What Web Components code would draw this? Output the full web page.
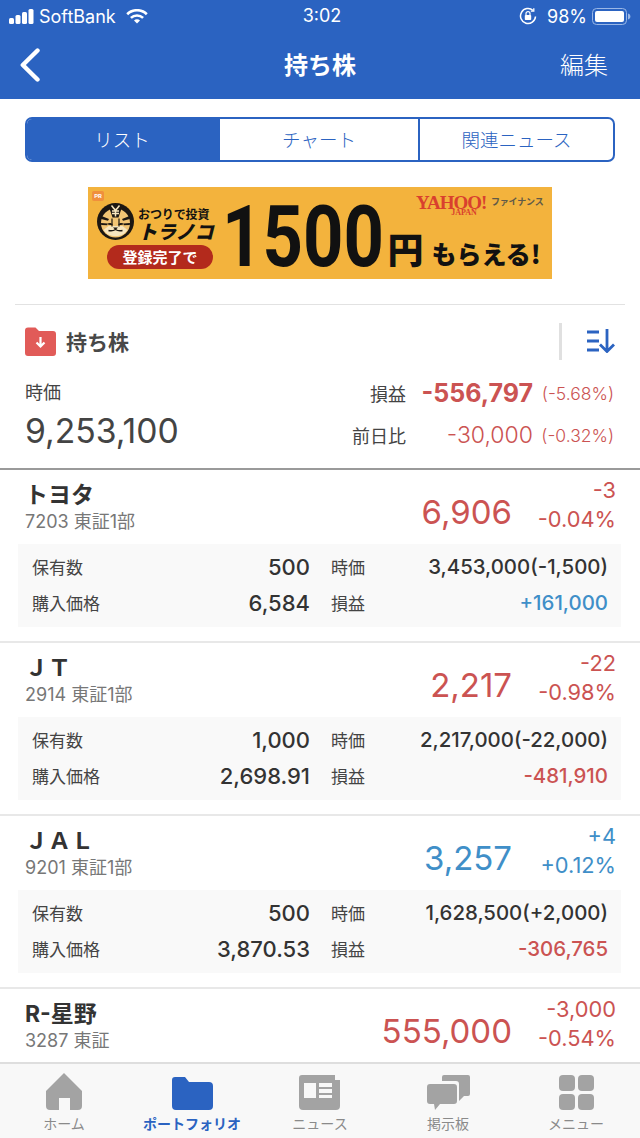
<!DOCTYPE html>
<html lang="ja">
<head>
<meta charset="utf-8">
<title>持ち株</title>
<style>
  html, body { margin: 0; height: 100%; }
  body {
    font-family: Inter, "Noto Sans CJK JP", sans-serif;
    color: #3a3a3a;
    background: #fff;
    overflow: hidden;
  }
  #app { display: flex; flex-direction: column; height: 1138px; }
  #list { flex: 1; min-height: 0; overflow: hidden; }
</style>
</head>
<body>
<div id="app">
  <status-bar></status-bar>
  <nav-bar title="持ち株" action="編集"></nav-bar>
  <seg-tabs></seg-tabs>
  <ad-banner></ad-banner>
  <holdings-summary></holdings-summary>
  <div id="list">
    <stock-row name="トヨタ" code="7203 東証1部" price="6,906" change="-3" pct="-0.04%" tone="down"
      qty="500" cost="6,584" value="3,453,000(-1,500)" gain="+161,000" gain-tone="up"></stock-row>
    <stock-row name="ＪＴ" code="2914 東証1部" price="2,217" change="-22" pct="-0.98%" tone="down"
      qty="1,000" cost="2,698.91" value="2,217,000(-22,000)" gain="-481,910" gain-tone="down"></stock-row>
    <stock-row name="ＪＡＬ" code="9201 東証1部" price="3,257" change="+4" pct="+0.12%" tone="up"
      qty="500" cost="3,870.53" value="1,628,500(+2,000)" gain="-306,765" gain-tone="down"></stock-row>
    <stock-row name="R-星野" code="3287 東証" price="555,000" change="-3,000" pct="-0.54%" tone="down"></stock-row>
  </div>
  <tab-bar></tab-bar>
</div>

<script>
// Small helper so each element just declares its css + html
function define(tag, css, render) {
  customElements.define(tag, class extends HTMLElement {
    constructor() {
      super();
      this.attachShadow({ mode: "open" });
    }
    connectedCallback() {
      this.shadowRoot.innerHTML = `<style>${css}</style>${render(this)}`;
    }
  });
}

define("status-bar", `
  :host { display: flex; align-items: center; height: 32px; background: #2b63c1; color: #fff; font-size: 18px; position: relative; }
  .left { display: flex; align-items: center; padding-left: 9px; }
  .carrier { margin-left: 5px; }
  .wifi { margin-left: 10px; }
  .time { position: absolute; left: 0; right: 0; top: 6px; text-align: center; padding-left: 4px; line-height: 20px; }
  .right { margin-left: auto; display: flex; align-items: center; padding-right: 9px; }
  .pct { margin: 0 5px 0 10px; }
`, () => `
  <div class="left">
    <svg width="25" height="15" viewBox="0 0 25 15" fill="#fff">
      <rect x="0" y="9" width="5" height="6" rx="1.5"/>
      <rect x="6.5" y="6" width="5" height="9" rx="1.5"/>
      <rect x="13" y="3" width="5" height="12" rx="1.5"/>
      <rect x="19.5" y="0" width="5" height="15" rx="1.5"/>
    </svg>
    <span class="carrier">SoftBank</span>
    <svg class="wifi" width="22" height="15" viewBox="0 0 22 15" fill="none" stroke="#fff" stroke-width="2.6">
      <path d="M1.2 5.2a14 14 0 0 1 19.6 0"/>
      <path d="M4.9 8.9a8.8 8.8 0 0 1 12.2 0"/>
      <path d="M11 14.6l-3-3a4.2 4.2 0 0 1 6 0z" fill="#fff" stroke="none"/>
    </svg>
  </div>
  <div class="time">3:02</div>
  <div class="right">
    <svg width="18" height="18" viewBox="0 0 18 18" fill="none" stroke="#fff" stroke-width="1.5">
      <path d="M16.5 9.5a7.5 7.5 0 1 1-2.4-6"/>
      <path d="M14.8 1.2v3h-3" stroke-width="1.3"/>
      <rect x="5.8" y="8" width="6.4" height="5" rx=".8" fill="#fff" stroke="none"/>
      <path d="M7 8V6.6a2 2 0 0 1 4 0V8" stroke-width="1.2"/>
    </svg>
    <span class="pct">98%</span>
    <svg width="39" height="17" viewBox="0 0 39 17">
      <rect x=".5" y=".5" width="34" height="16" rx="4" fill="none" stroke="#9ab7e6"/>
      <rect x="3" y="3" width="29" height="11" rx="2" fill="#fff"/>
      <path d="M36 5.5c1.600.4 2.400 1.600 2.400 3s-.8 2.600-2.400 3z" fill="#9ab7e6"/>
    </svg>
  </div>
`);

define("nav-bar", `
  :host { display: flex; align-items: center; justify-content: space-between; height: 67px; background: #2b63c1; color: #fff; position: relative; padding: 0 32px 4px 20px; box-sizing: border-box; }
  svg { display: block; margin-top: 3px; }
  .title { position: absolute; left: 0; right: 0; text-align: center; font-size: 24px; font-weight: 700; }
  .action { font-size: 24px; font-weight: 300; }
`, (el) => `
  <svg width="20" height="34" viewBox="0 0 20 34" fill="none" stroke="#fff" stroke-width="4.4" stroke-linecap="round" stroke-linejoin="round"><path d="M17.5 2.5L2.8 17l14.7 14.500"/></svg>
  <span class="title">${el.getAttribute("title")}</span>
  <span class="action">${el.getAttribute("action")}</span>
`);

define("seg-tabs", `
  :host { display: block; padding: 18px 25px 0; }
  .wrap { display: grid; grid-template-columns: 193px 198px 1fr; height: 45px; border: 2px solid #2b63c1; border-radius: 7px; box-sizing: border-box; overflow: hidden; }
  .seg { display: flex; align-items: center; justify-content: center; font-size: 18.500px; color: #2b63c1; font-weight: 300; padding-bottom: 2px; }
  .seg + .seg { border-left: 2px solid #2b63c1; }
  .on { background: #2b63c1; color: #fff; padding-right: 3px; }
  .seg.on + .seg { border-left: 0; }
`, () => `
  <div class="wrap">
    <div class="seg on">リスト</div>
    <div class="seg">チャート</div>
    <div class="seg">関連ニュース</div>
  </div>
`);

define("ad-banner", `
  :host { display: block; padding: 25px 88px 25px; }
  .ad { position: relative; display: flex; height: 92px; background: #f3b33d; color: #111; font-family: "Noto Sans CJK JP", sans-serif; font-weight: 700; }
  .pr { position: absolute; left: 4px; top: 4px; width: 12px; height: 10px; border-radius: 2px; background: #f08f3c; color: #fff; font: 700 6px/10px Roboto, sans-serif; text-align: center; }
  .brandcol { width: 127px; margin-left: 9px; padding-top: 16px; flex: none; }
  .brand { display: flex; gap: 4px; height: 37px; }
  .words { display: flex; flex-direction: column; }
  .tag { font-size: 12px; line-height: 17px; letter-spacing: -.1px; white-space: nowrap; margin-top: 2px; }
  .logo { font-size: 19px; line-height: 18px; font-style: italic; font-weight: 900; white-space: nowrap; }
  .pill { margin: 5px 0 0 10px; width: 106px; height: 24px; border-radius: 12px; background: #b32a1c; color: #fff; font-size: 15px; line-height: 24px; text-align: center; white-space: nowrap; }
  .big { flex: none; margin: 4px -34px 0 -2px; font: 700 86px/92px Roboto, sans-serif; height: 86px; transform: scaleX(.82); transform-origin: left center; white-space: nowrap; }
  .yen { flex: none; font-size: 36px; line-height: 36px; margin: 43px 0 0 2px; font-weight: 900; }
  .get { flex: none; font-size: 25px; line-height: 30px; margin: 51px 0 0 8px; white-space: nowrap; font-weight: 900; }
  .yj { position: absolute; left: 328px; top: 8px; display: flex; gap: 3px; }
  .yahoo { color: #d9402e; font: 700 19px/15px "Liberation Serif", serif; letter-spacing: -1px; width: 72px; }
  .yahoo small { display: block; font-size: 8px; line-height: 8px; text-align: center; letter-spacing: 0; padding-left: 24px; margin-top: -1px; }
  .fin { color: #5f5a48; font-size: 9px; line-height: 14px; white-space: nowrap; letter-spacing: -.2px; }
`, () => `
  <div class="ad">
    <div class="pr">PR</div>
    <div class="brandcol">
      <div class="brand">
        <svg width="37" height="37" viewBox="0 0 37 37">
          <circle cx="18.500" cy="18.500" r="18.500" fill="#1c1712"/>
          <circle cx="18.500" cy="20" r="14.500" fill="#f2c574"/>
          <path d="M6.500 27c3 4.500 7 6 12 6s9-1.500 12-6l-5-4h-14z" fill="#f7e6bf"/>
          <path d="M12.500 5.500l3 9h6l3-9z" fill="#1c1712"/>
          <path d="M14.500 2.500l4 5 4-5M15 8h7M15 10.500h7M18.500 7.500v6" fill="none" stroke="#f7e6bf" stroke-width="1.500"/>
          <path d="M4.500 13l7.500 3-1 1.800-7-1.800zM32.500 13l-7.500 3 1 1.800 7-1.800zM4 20l6.500.5-.3 1.800-6-.3zM33 20l-6.500.5.300 1.800 6-.3z" fill="#1c1712"/>
          <path d="M10 21c2-1.500 4-1.500 6 .5-2 .8-4 .8-6-.5zM27 21c-2-1.500-4-1.500-6 .5 2 .8 4 .8 6-.5z" fill="#1c1712"/>
          <path d="M15 15.500v8M22 15.500v8" stroke="#1c1712" stroke-width="1.200"/>
          <path d="M16 24.500h5l-2.500 2.500z" fill="#1c1712"/>
          <path d="M11.500 27.500c3 .8 5.500 0 7-1 1.500 1 4 1.800 7 1" fill="none" stroke="#1c1712" stroke-width="1.500"/>
        </svg>
        <div class="words">
          <span class="tag">おつりで投資</span>
          <span class="logo">トラノコ</span>
        </div>
      </div>
      <div class="pill">登録完了で</div>
    </div>
    <div class="big">1500</div>
    <div class="yen">円</div>
    <div class="get">もらえる!</div>
    <div class="yj">
      <div class="yahoo">YAHOO!<small>JAPAN</small></div>
      <div class="fin">ファイナンス</div>
    </div>
  </div>
`);

define("holdings-summary", `
  :host { display: block; margin: 0 15px; border-top: 1px solid #e2e2e2; }
  .outer { padding: 0 10px; height: 163px; box-sizing: border-box; }
  .head { display: flex; align-items: center; height: 72px; }
  .title { font-size: 21px; font-weight: 700; color: #484848; margin-left: 10px; }
  .rule { margin-left: auto; width: 3px; height: 37px; background: #e0e0e0; }
  .sort { margin-left: 25px; }
  .body { display: flex; justify-content: space-between; }
  .cap { font-size: 18px; line-height: 32px; color: #444; }
  .total { font-size: 33.700px; line-height: 44px; color: #444; }
  .grid { display: grid; grid-template-columns: max-content 127px 81px; align-items: center; grid-auto-rows: 42px; margin: -5px 1px 0 0; }
  .lab { font-size: 18px; color: #444; text-align: right; }
  .val { color: #cb5352; text-align: right; font-size: 23px; font-weight: 300; }
  .val.b { font-size: 25px; font-weight: 700; }
  .sub { color: #cb5352; text-align: right; font-size: 17.500px; font-weight: 300; white-space: nowrap; }
`, () => `
  <div class="outer">
    <div class="head">
      <svg width="31" height="29" viewBox="0 0 31 29">
        <path d="M0 3.500A3 3 0 0 1 3 .5h7.500l3.500 3.500h14a3 3 0 0 1 3 3V26a3 3 0 0 1-3 3H3a3 3 0 0 1-3-3z" fill="#e15b58"/>
        <path d="M15.500 10v9M11.500 15.500l4 4 4-4" fill="none" stroke="#fff" stroke-width="2.200"/>
      </svg>
      <span class="title">持ち株</span>
      <span class="rule"></span>
      <svg class="sort" width="28" height="24" viewBox="0 0 28 24" fill="none" stroke="#2b63c1" stroke-width="2.800">
        <path d="M0 3h12M0 12h12M0 21h12M20 0v22M13 15.500l7 7 7-7"/>
      </svg>
    </div>
    <div class="body">
      <div>
        <div class="cap">時価</div>
        <div class="total">9,253,100</div>
      </div>
      <div class="grid">
        <span class="lab">損益</span><span class="val b">-556,797</span><span class="sub">(-5.68%)</span>
        <span class="lab">前日比</span><span class="val">-30,000</span><span class="sub">(-0.32%)</span>
      </div>
    </div>
  </div>
`);

define("stock-row", `
  :host { display: block; height: 173px; box-sizing: border-box; border-top: 2px solid #e8e8e8; }
  :host(:first-child) { border-top-color: #9a9a9a; }
  .head { display: flex; height: 74px; padding: 0 24px 0 25px; }
  .id { flex: 1; padding-top: 11px; }
  .name { font-size: 23px; line-height: 29px; font-weight: 700; color: #333; white-space: pre; }
  .code { font-size: 18px; line-height: 24px; color: #777; }
  .price { font-size: 33px; line-height: 44px; padding-top: 20px; }
  .chg { width: 104px; text-align: right; font-size: 21.800px; line-height: 29px; padding-top: 6px; }
  .down { color: #cb5352; }
  .up { color: #3f8fc8; }
  .detail { display: grid; grid-template-columns: 278px 277px; column-gap: 21px; grid-auto-rows: 36px; align-content: center; height: 83px; margin: 0 19px 0 18px; padding: 0 13px 2px 14px; box-sizing: border-box; background: #f9f9f9; }
  .cell { display: flex; justify-content: space-between; align-items: center; }
  .k { font-size: 17px; color: #444; }
  .v { font-size: 22px; font-weight: 500; color: #333; }
  .w { font-size: 20.400px; font-weight: 500; color: #333; }
  .w.down { color: #cb5352; }
  .w.up { color: #3f8fc8; }
`, (el) => {
  const a = (n) => el.getAttribute(n);
  // last row is cut by the tab bar, only its head shows
  const detail = a("qty") ? `
    <div class="detail">
      <div class="cell"><span class="k">保有数</span><span class="v">${a("qty")}</span></div>
      <div class="cell"><span class="k">時価</span><span class="w">${a("value")}</span></div>
      <div class="cell"><span class="k">購入価格</span><span class="v">${a("cost")}</span></div>
      <div class="cell"><span class="k">損益</span><span class="w ${a("gain-tone")}">${a("gain")}</span></div>
    </div>` : "";
  return `
    <div class="head">
      <div class="id">
        <div class="name">${a("name")}</div>
        <div class="code">${a("code")}</div>
      </div>
      <div class="price ${a("tone")}">${a("price")}</div>
      <div class="chg ${a("tone")}">
        <div>${a("change")}</div>
        <div>${a("pct")}</div>
      </div>
    </div>
    ${detail}
  `;
});

define("tab-item", `
  :host { display: flex; flex-direction: column; align-items: center; flex: 1; color: #8a8a8a; font-size: 14px; }
  :host([active]) { color: #2b63c1; font-weight: 700; }
  .icon { height: 38px; display: flex; align-items: flex-end; }
  .label { line-height: 20px; margin-top: 4px; white-space: nowrap; }
`, (el) => `
  <div class="icon"><slot></slot></div>
  <div class="label">${el.getAttribute("label")}</div>
`);

define("tab-bar", `
  :host { display: flex; flex: none; height: 76px; box-sizing: border-box; border-top: 2px solid #dedede; background: #f8f8f8; padding-top: 8px; }
`, () => `
  <tab-item label="ホーム">
    <svg width="36" height="37" viewBox="0 0 36 37"><path d="M18 0L36 18v15a4 4 0 0 1-4 4h-8V25H13v12H4a4 4 0 0 1-4-4V18z" fill="#a3a3a3"/></svg>
  </tab-item>
  <tab-item label="ポートフォリオ" active>
    <svg width="41" height="33" viewBox="0 0 41 33"><path d="M0 3a3 3 0 0 1 3-3h10l4 5h20a4 4 0 0 1 4 4v20a4 4 0 0 1-4 4H4a4 4 0 0 1-4-4z" fill="#2b63c1"/></svg>
  </tab-item>
  <tab-item label="ニュース">
    <svg width="42" height="35" viewBox="0 0 42 35"><path d="M3 0h33v5h5v26a4 4 0 0 1-4 4H4a4 4 0 0 1-4-4V3a3 3 0 0 1 3-3z" fill="#a3a3a3"/><path d="M5 8h12v15H5z" fill="#f8f8f8"/><path d="M20 8h13v4H20zM20 14h13v4H20zM20 20h13v3H20z" fill="#f8f8f8"/></svg>
  </tab-item>
  <tab-item label="掲示板">
    <svg width="43" height="35" viewBox="0 0 43 35"><path d="M3 9h24a3 3 0 0 1 3 3v14a3 3 0 0 1-3 3H13l-5 6-1-6H3a3 3 0 0 1-3-3V12a3 3 0 0 1 3-3z" fill="#a3a3a3"/><path d="M17 0h24a2 2 0 0 1 2 2v17a2 2 0 0 1-2 2h-4l-5 5v-5V9a3 3 0 0 0-3-3H15V2a2 2 0 0 1 2-2z" fill="#a3a3a3"/></svg>
  </tab-item>
  <tab-item label="メニュー">
    <svg width="35" height="35" viewBox="0 0 35 35" fill="#a3a3a3"><rect width="16" height="16" rx="4"/><rect x="19" width="16" height="16" rx="4"/><rect y="19" width="16" height="16" rx="4"/><rect x="19" y="19" width="16" height="16" rx="4"/></svg>
  </tab-item>
`);
</script>
</body>
</html>
